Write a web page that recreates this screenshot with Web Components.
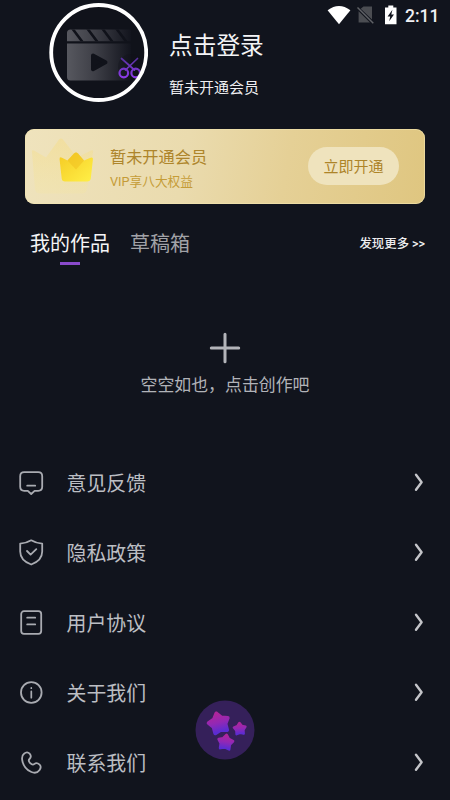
<!DOCTYPE html>
<html lang="zh-CN">
<head>
<meta charset="utf-8">
<title>我的</title>
<style>
html,body{margin:0;background:#11141d;height:800px;overflow:hidden}
body{font-family:Roboto,"Noto Sans CJK SC",sans-serif}
</style>
</head>
<body>
<profile-page></profile-page>
<script>
function define(name, html) {
  const t = document.createElement('template');
  t.innerHTML = html;
  customElements.define(name, class extends HTMLElement {
    constructor() {
      super();
      this.attachShadow({mode: 'open'}).appendChild(t.content.cloneNode(true));
    }
  });
}

define('status-bar', `
<style>
:host{position:absolute;top:0;left:0;right:0;height:30px;display:flex;align-items:center;justify-content:flex-end;padding-right:10.500px;box-sizing:border-box;color:#f0f0f3;font-size:17.500px;font-weight:500;line-height:30px}
svg{display:block;margin-right:7px}
span{padding-top:1px}
</style>
<svg width="72" height="30" viewBox="326 0 72 30">
<path d="M327.600 10.200Q339 1.600 350.400 10.200L339 24.200Z" fill="#fff"/>
<path d="M363.500 6.500H372V19.600L360.700 8.700ZM358.600 11.200L370 22.600H358.600Z" fill="#4b4d52"/>
<path d="M357.500 7.500L373.300 23.200" stroke="#606267" stroke-width="1.500"/>
<path d="M388.300 5.600h5v2h3.200v16.700h-11.500V7.600h3.300z" fill="#fff"/>
<path d="M392.400 9.800L387.600 16.500h2.600L389.200 21.300L394 14.500h-2.700z" fill="#11141d"/>
</svg><span>2:11</span>`);

define('user-avatar', `
<style>
:host{display:block;flex:none;width:99px;height:99px}
svg{display:block}
</style>
<svg width="99" height="99" viewBox="49 3 99 99">
<defs>
<linearGradient id="g" gradientUnits="userSpaceOnUse" x1="67" x2="131" y1="0" y2="0"><stop offset="0" stop-color="#57585f"/><stop offset=".45" stop-color="#3d3e46"/><stop offset="1" stop-color="#12141d"/></linearGradient>
<linearGradient id="p" gradientUnits="userSpaceOnUse" x1="0" x2="0" y1="58" y2="77"><stop offset="0" stop-color="#56309d"/><stop offset="1" stop-color="#8b3ae6"/></linearGradient>
<clipPath id="c"><circle cx="98.700" cy="52.500" r="46"/></clipPath>
<clipPath id="t"><path d="M67 33q0-3.500 3.500-3.500H131V41.300H67z"/></clipPath>
</defs>
<circle cx="98.700" cy="52.500" r="47.700" fill="#10121a"/>
<g clip-path="url(#c)">
<g clip-path="url(#t)"><rect x="67" y="29" width="64" height="13" fill="url(#g)"/>
<path d="M72 28L82.500 42M87 28L97.500 42M102 28L112.500 42M116 28L126.500 42" stroke="#10121a" stroke-width="2.600"/></g>
<path d="M67 43.500H131V80.500H70.500q-3.500 0-3.500-3.500z" fill="url(#g)"/>
<path d="M93 55.500L105.500 62.200L93 69.200Z" fill="#10121a" stroke="#10121a" stroke-width="4" stroke-linejoin="round"/>
<circle cx="131" cy="67" r="13" fill="#10121a" opacity=".35"/>
<g fill="none" stroke="url(#p)" stroke-width="2.200" stroke-linecap="round">
<path d="M121.500 58.500L134.500 70M137.500 58.500L125.500 70" stroke-width="1.700"/>
<circle cx="123.800" cy="73" r="4.300"/><circle cx="135.700" cy="73" r="4.300"/></g>
</g>
<circle cx="98.700" cy="52.500" r="47.500" fill="none" stroke="#fff" stroke-width="3.800"/>
</svg>`);

define('user-header', `
<style>
:host{display:flex;gap:21px;padding:3px 0 0 49px;height:128.500px;box-sizing:border-box}
.n{padding-top:25px}
.a{font-size:23.700px;line-height:36px;color:#f4f4f6}
.b{font-size:15px;line-height:24px;margin-top:12px;color:#eeeef1}
</style>
<user-avatar></user-avatar><div class="n"><div class="a"><slot name="name"></slot></div><div class="b"><slot name="status"></slot></div></div>`);

define('vip-card', `
<style>
:host{display:flex;align-items:center;margin:0 25px;width:400px;height:75px;border-radius:9px;overflow:hidden;box-sizing:border-box;padding-right:26px;background:linear-gradient(100deg,#efe3bd 0%,#eadbae 40%,#e5d096 65%,#dfc680 100%);box-shadow:inset 0 0 0 1px #f2e4af99}
svg{display:block;flex:none}
.t{flex:1;color:#ae852b;padding-top:6px}
.a{font-size:16.200px;line-height:24px}
.b{font-size:12.700px;line-height:20px;margin-top:2px;color:#c59c37}
.btn{width:91px;height:38px;border-radius:19px;background:#efe3bd;color:#ad8429;font-size:15px;line-height:40px;text-align:center}
</style>
<svg width="85" height="75" viewBox="25 128.500 85 75">
<defs><linearGradient id="k" x1="0" y1="0" x2="1" y2="1"><stop offset="0" stop-color="#f5ca24"/><stop offset="1" stop-color="#fff047"/></linearGradient>
<linearGradient id="f" x1="0" y1="0" x2="0" y2="1"><stop offset="0" stop-color="#f5dc86" stop-opacity=".5"/><stop offset="1" stop-color="#f5e69c" stop-opacity=".25"/></linearGradient></defs>
<path d="M32 152Q31 149 34 150L46 157L59 139Q61 137 63 139L77 157L91 150Q94 149 93 152L87 189Q86 193 82 193H40Q36 193 35 189Z" fill="url(#f)"/>
<path d="M59.600 159Q59.300 155.800 62 157.200L67.500 160L74 153Q76 151 78 153L84 160L90.500 157.300Q93.300 156 92.900 159L90.800 178Q90.400 181 87 181H65Q62 181 61.700 178Z" fill="url(#k)"/>
<path d="M67.500 160L74 153Q76 151 78 153L84 160L76 169Z" fill="#efbd1d" opacity=".5"/>
</svg>
<div class="t"><div class="a"><slot name="title"></slot></div><div class="b"><slot name="sub"></slot></div></div>
<div class="btn"><slot name="action"></slot></div>`);

define('works-tabs', `
<style>
:host{display:flex;margin-top:25px;padding:0 25px 0 30px;height:39.500px;line-height:30px;font-size:20px;color:#a1a2a7}
.on{color:#f4f4f6;margin-right:20px;display:flex;flex-direction:column;align-items:center}
.on::after{content:"";width:20px;height:3px;background:#8a4acb;margin-top:3px}
.more{margin-left:auto;font-size:12.400px;font-weight:500;color:#eeeef0}
</style>
<div class="on"><slot name="active"></slot></div><div><slot name="other"></slot></div><div class="more"><slot name="more"></slot></div>`);

define('empty-works', `
<style>
:host{display:flex;flex-direction:column;align-items:center;height:180px;padding-top:63.500px;box-sizing:border-box;color:#b1b3b8;font-size:16.900px;line-height:24px}
svg{display:block;margin-bottom:9px}
</style>
<svg width="32" height="32"><path d="M16 2.300V29.700M2.300 16H29.700" stroke="#b3b4b9" stroke-width="3" stroke-linecap="round"/></svg><span><slot></slot></span>`);

define('menu-row', `
<style>
:host{display:flex;align-items:center;height:70px;padding:0 24px 0 16px;color:#bcbec3;font-size:19.900px;line-height:30px}
::slotted(svg){display:block;width:30px;height:30px;margin-right:20.500px;fill:none;stroke:#a9abb1;stroke-width:1.800;stroke-linecap:round;stroke-linejoin:round}
span{flex:1;padding-top:4px}
.c{display:block}
</style>
<slot name="icon"></slot><span><slot></slot></span>
<svg class="c" width="14" height="22"><path d="M4 2.800L9.600 10.300L4 17.800" fill="none" stroke="#c4c5c9" stroke-width="2.400" stroke-linecap="round" stroke-linejoin="round"/></svg>`);

define('star-button', `
<style>
:host{position:absolute;left:195px;top:700px;width:60px;height:60px}
svg{display:block}
</style>
<svg width="60" height="60" viewBox="0 0 60 60">
<defs><linearGradient id="s" x1="0" y1="0" x2="0" y2="1"><stop offset="0" stop-color="#b0259c"/><stop offset=".5" stop-color="#9328b4"/><stop offset="1" stop-color="#5a2cd2"/></linearGradient>
<path id="q" d="M0-9.500L3.500-4.800L9-2.900L5.600 1.800L5.600 7.700L0 6L-5.600 7.700L-5.600 1.800L-9-2.900L-3.500-4.800Z" fill="url(#s)" stroke="url(#s)" stroke-width="3.500" stroke-linejoin="round"/></defs>
<circle cx="30" cy="30" r="29.500" fill="#35205a"/>
<use href="#q" transform="translate(24 23.500) rotate(-15) scale(1.100)"/>
<use href="#q" transform="translate(44.800 29) rotate(-4) scale(.65)"/>
<use href="#q" transform="translate(30.500 42.500) rotate(8) scale(.8)"/>
</svg>`);

define('profile-page', `
<style>
:host{display:block;position:relative;width:450px;height:800px;overflow:hidden;background:#11141d}
</style>
<status-bar></status-bar>
<user-header><span slot="name">点击登录</span><span slot="status">暂未开通会员</span></user-header>
<vip-card><span slot="title">暂未开通会员</span><span slot="sub">VIP享八大权益</span><span slot="action">立即开通</span></vip-card>
<works-tabs><span slot="active">我的作品</span><span slot="other">草稿箱</span><span slot="more">发现更多 &gt;&gt;</span></works-tabs>
<empty-works>空空如也，点击创作吧</empty-works>
<menu-row><svg slot="icon" viewBox="0 0 30 30"><path d="M8.200 4.200H22.200Q26.200 4.200 26.200 8.200V18.800Q26.200 22.800 22.200 22.800H18.600L15.200 26L11.800 22.800H8.200Q4.200 22.800 4.200 18.800V8.200Q4.200 4.200 8.200 4.200ZM11.200 17.700H19.200"/></svg>意见反馈</menu-row>
<menu-row><svg slot="icon" viewBox="0 0 30 30"><path d="M15.200 2.300Q20 5.300 26.200 5.600V13.500Q26.200 22.500 15.200 26.500Q4.200 22.500 4.200 13.500V5.600Q10.400 5.300 15.200 2.300ZM11 13L14.600 16.600L20.300 11.200"/></svg>隐私政策</menu-row>
<menu-row><svg slot="icon" viewBox="0 0 30 30"><rect x="5.200" y="3.200" width="20" height="22.700" rx="2.800"/><path d="M11.200 9.700H19.200M11.200 16.400H19.200"/></svg>用户协议</menu-row>
<menu-row><svg slot="icon" viewBox="0 0 30 30"><circle cx="15.300" cy="14.500" r="10.300"/><path d="M15.300 13.400V19.700M15.300 9.900V10.200" stroke-width="1.700"/></svg>关于我们</menu-row>
<menu-row><svg slot="icon" viewBox="0 0 30 30"><path d="M8 5.700C10 4.100 12 4 13.600 5.700C15.400 7.700 15.200 9.300 13.500 11C12.200 12.300 12.600 13.600 14.200 15.200C15.900 16.900 17.100 17.100 18.500 15.900C20 14.600 21.700 14.900 23.600 16.700C25.200 18.300 24.900 20.100 23.600 22C21.500 25 18.700 25.500 14.900 23.800C10.500 21.800 7.200 17.500 6.300 12.500C5.700 9.200 6 7.200 8 5.700Z"/></svg>联系我们</menu-row>
<star-button></star-button>`);
</script>
</body>
</html>
